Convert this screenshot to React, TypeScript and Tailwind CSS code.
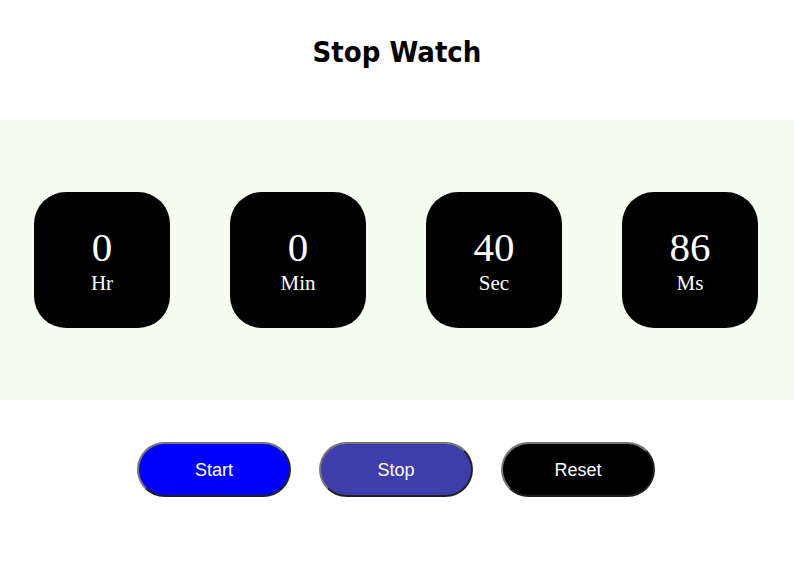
import React from 'react';

const units = [
    { id: 1, value: 0, label: 'Hr' },
    { id: 2, value: 0, label: 'Min' },
    { id: 3, value: 40, label: 'Sec' },
    { id: 4, value: 86, label: 'Ms' },
];

const App = () => {
    return (
        <div className="w-full min-h-[567px] bg-white flex flex-col">
            <h1 className="text-center font-bold text-[29px] pt-[31px] h-[120px] font-['DejaVu_Sans_Condensed','DejaVu_Sans',sans-serif] [font-stretch:semi-condensed]">
                Stop Watch
            </h1>
            <div className="h-[280px] bg-[#f5fdef] flex justify-center items-center gap-[60px] pr-[2px]">
                {units.map((unit) => {
                    return (
                        <div
                            key={unit.id}
                            className="w-[136px] h-[136px] bg-black rounded-[32px] flex flex-col items-center justify-center text-white font-['Liberation_Serif',serif]"
                        >
                            <span className="text-[41px] leading-[44px] mt-[1px]">{unit.value}</span>
                            <span className="text-[21px] leading-[26px] mt-[1px]">{unit.label}</span>
                        </div>
                    );
                })}
            </div>
            <div className="flex justify-center gap-[28px] pt-[42px] pr-[2px] font-['Liberation_Sans',sans-serif]">
                <button className="w-[154px] h-[55px] rounded-full border-2 border-[#767676] [border-style:outset] bg-[#0000ff] text-white text-[18px] pt-[1px]">
                    Start
                </button>
                <button className="w-[154px] h-[55px] rounded-full border-2 border-[#767676] [border-style:outset] bg-[#3f3dab] text-white text-[18px] pt-[1px]">
                    Stop
                </button>
                <button className="w-[154px] h-[55px] rounded-full border-2 border-[#767676] [border-style:outset] bg-black text-white text-[18px] pt-[1px]">
                    Reset
                </button>
            </div>
        </div>
    );
};

export default App;
